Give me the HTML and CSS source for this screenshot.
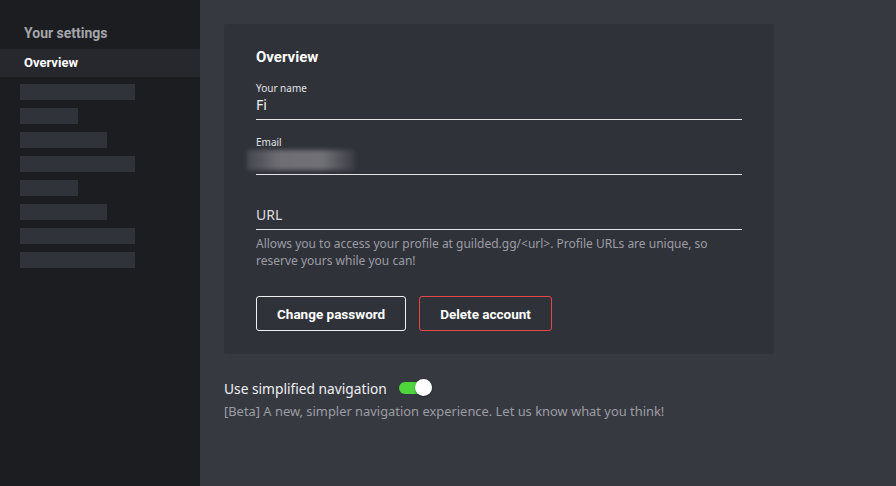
FILE: index.html
```html
<!DOCTYPE html>
<html>
<head>
<meta charset="utf-8">
<link rel="stylesheet" href="styles.css">
</head>
<body>
<div class="app">
  <aside class="sidebar">
    <div class="side-title">Your settings</div>
    <div class="side-item active">Overview</div>
    <div class="bars">
      <div class="bar w-l"></div>
      <div class="bar w-s"></div>
      <div class="bar w-m"></div>
      <div class="bar w-l"></div>
      <div class="bar w-s"></div>
      <div class="bar w-m"></div>
      <div class="bar w-l"></div>
      <div class="bar w-l"></div>
    </div>
  </aside>
  <main class="main">
    <section class="card">
      <h2 class="card-title">Overview</h2>
      <div class="field field-name">
        <div class="label">Your name</div>
        <div class="value">Fi</div>
      </div>
      <div class="field field-email">
        <div class="label">Email</div>
        <div class="value"><span class="blur"></span></div>
      </div>
      <div class="field field-url">
        <div class="value placeholder">URL</div>
      </div>
      <p class="help">Allows you to access your profile at guilded.gg/&lt;url&gt;. Profile URLs are unique, so reserve yours while you can!</p>
      <div class="buttons">
        <button class="btn">Change password</button>
        <button class="btn danger">Delete account</button>
      </div>
    </section>
    <div class="toggle-row">
      <span class="toggle-label">Use simplified navigation</span>
      <span class="toggle"><span class="knob"></span></span>
    </div>
    <p class="beta">[Beta] A new, simpler navigation experience. Let us know what you think!</p>
  </main>
</div>
</body>
</html>
```
FILE: styles.css
```css
* { box-sizing: border-box; }
html, body { margin: 0; height: 100%; }
body {
  font-family: "Noto Sans", "Open Sans", sans-serif;
  background: #373941;
  color: #ececee;
  overflow: hidden;
}
.app { display: flex; height: 486px; }
.sidebar {
  width: 200px;
  flex: none;
  background: #1c1d21;
  padding-top: 22px;
}
.side-title {
  padding-left: 24px;
  font-family: Roboto, "Noto Sans", sans-serif;
  font-size: 14px;
  font-weight: 700;
  color: #a4a5ab;
  height: 22px;
  line-height: 22px;
}
.side-item {
  margin-top: 5px;
  height: 28px;
  line-height: 28px;
  padding-left: 24px;
  font-family: Roboto, "Noto Sans", sans-serif;
  font-size: 13px;
  font-weight: 700;
  color: #ffffff;
}
.side-item.active { background: #27282e; }
.bars {
  padding: 7px 0 0 20px;
  display: flex;
  flex-direction: column;
  gap: 8px;
}
.bar { height: 16px; background: #31333b; }
.w-l { width: 115px; }
.w-m { width: 87px; }
.w-s { width: 58px; }
.main {
  flex: 1;
  padding: 24px 24px 0 24px;
}
.card {
  width: 550px;
  background: #30323a;
  border-radius: 3px;
  padding: 23px 32px 23px 32px;
}
.card-title {
  margin: 0;
  font-family: Roboto, "Noto Sans", sans-serif;
  font-size: 15px;
  font-weight: 700;
  color: #fff;
  line-height: 20px;
}
.field {
  width: 486px;
  border-bottom: 1px solid #e6e6e8;
}
.field-name { padding-top: 14px; }
.field-email { padding-top: 15px; }
.field-url { padding-top: 30px; }
.label {
  font-size: 10px;
  line-height: 14px;
  color: #e2e2e5;
}
.value {
  font-size: 14px;
  line-height: 20px;
  height: 24px;
  color: #f0f0f2;
}
.field-email .value { height: 25px; padding-top: 1px; }
.placeholder { color: #dcdcdf; }
.blur {
  display: block;
  margin-left: -9px;
  width: 108px;
  height: 20px;
  background: linear-gradient(90deg, rgba(120,120,126,0.3), #6e6e74 30%, #707076 70%, rgba(100,100,106,0.2));
  filter: blur(2px);
}
.help {
  margin: 5px 0 0 0;
  font-size: 12px;
  line-height: 17px;
  color: #9c9da3;
  width: 490px;
}
.buttons {
  display: flex;
  gap: 13px;
  margin-top: 27px;
}
.btn {
  font-family: Roboto, "Noto Sans", sans-serif;
  font-size: 13.5px;
  font-weight: 700;
  color: #fff;
  background: transparent;
  border: 1px solid #f0f0f2;
  border-radius: 3px;
  height: 35px;
  padding: 0 20px;
}
.btn.danger { border-color: #e24848; }
.toggle-row {
  display: flex;
  align-items: center;
  margin-top: 24px;
  height: 20px;
}
.toggle-label {
  font-size: 13.75px;
  color: #f0f0f2;
}
.toggle {
  position: relative;
  margin-left: 12px;
  width: 33px;
  height: 12px;
  border-radius: 6px;
  background: #4fd43c;
}
.knob {
  position: absolute;
  right: 0;
  top: -3px;
  width: 17px;
  height: 17px;
  border-radius: 50%;
  background: #fff;
  box-shadow: 0 1px 2px rgba(0,0,0,0.4);
}
.beta {
  margin: 4px 0 0 0;
  font-size: 12.9px;
  line-height: 18px;
  color: #9c9da3;
}
```
